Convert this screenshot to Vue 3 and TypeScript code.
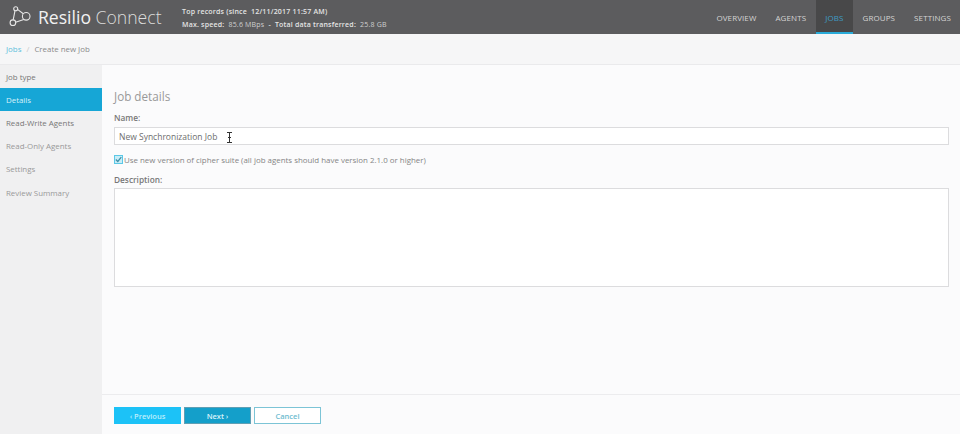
<script setup lang="ts">
const steps = ['Job type', 'Details', 'Read-Write Agents', 'Read-Only Agents', 'Settings', 'Review Summary']
const nav = ['OVERVIEW', 'AGENTS', 'JOBS', 'GROUPS', 'SETTINGS']
</script>

<template>
  <div class="page">
    <header class="top">
      <div class="brand">
        <svg class="logo" width="24" height="24" viewBox="0 0 24 24" fill="none" stroke="#e6e6e6" stroke-width="1.1">
          <circle cx="6.700" cy="3.700" r="2" />
          <circle cx="17.200" cy="11.300" r="3.800" />
          <circle cx="3.900" cy="17.700" r="2.800" />
          <path d="M6 5.600 L4.200 14.900 M8.500 4.400 L14.300 8.800 M6.600 17.300 L14.800 14.400" />
        </svg>
        <span class="name"><span class="name-a">Resilio</span> <span class="name-b">Connect</span></span>
      </div>
      <div class="records">
        <div>Top records (since&nbsp; 12/11/2017 11:57 AM)</div>
        <div>Max. speed:&nbsp; <span class="dim">85.6 MBps</span>&nbsp; -&nbsp; Total data transferred:&nbsp; <span class="dim">25.8 GB</span></div>
      </div>
      <nav class="nav">
        <a v-for="n in nav" :key="n" class="nav-item" :class="{ active: n === 'JOBS' }">{{ n }}</a>
      </nav>
    </header>

    <div class="crumbs">
      <a class="crumb-link">Jobs</a><span class="sep">/</span><span>Create new Job</span>
    </div>

    <div class="body">
      <aside class="side">
        <div v-for="s in steps" :key="s" class="step" :class="{
          current: s === 'Details',
          soft: ['Read-Only Agents', 'Settings', 'Review Summary'].includes(s)
        }">{{ s }}</div>
      </aside>

      <main class="main">
        <div class="form">
          <h1 class="title">Job details</h1>
          <label class="label">Name:</label>
          <div class="input">
            <span>New Synchronization Job</span>
            <svg class="caret" width="7" height="11" viewBox="0 0 7 11" fill="none" stroke="#333" stroke-width="1">
              <path d="M1 .5h5M1 10.500h5M3.500 .5v10M2 5.500h3" />
            </svg>
          </div>
          <div class="check-row">
            <span class="box">
              <svg width="7" height="7" viewBox="0 0 7 7" fill="none" stroke="#3f8fa8" stroke-width="1.200"><path d="M.8 3.500 2.800 5.500 6.300 1.200" /></svg>
            </span>
            Use new version of cipher suite (all job agents should have version 2.1.0 or higher)
          </div>
          <label class="label desc">Description:</label>
          <div class="textarea"></div>
        </div>
        <footer class="foot">
          <button class="btn prev">‹ Previous</button>
          <button class="btn next">Next ›</button>
          <button class="btn cancel">Cancel</button>
        </footer>
      </main>
    </div>
  </div>
</template>

<style scoped>
.page {
  width: 960px;
  height: 434px;
  display: flex;
  flex-direction: column;
  overflow: hidden;
  font-family: "Open Sans", "Liberation Sans", sans-serif;
  background: #fbfbfc;
  color: #666;
}
.top {
  height: 34px;
  flex: none;
  background: #5c5c5e;
  display: flex;
  align-items: center;
  padding-left: 9px;
}
.brand {
  display: flex;
  align-items: center;
  gap: 5px;
  width: 173px;
}
.logo {
  flex: none;
}
.name {
  font-size: 17.600px;
  white-space: nowrap;
}
.name-a {
  color: #f2f2f2;
}
.name-b {
  color: #dcdcdc;
  font-weight: 300;
}
.records {
  font-size: 7px;
  font-weight: 600;
  line-height: 13px;
  color: #e4e4e4;
  letter-spacing: 0.2px;
  white-space: nowrap;
  padding-top: 2px;
}
.dim {
  color: #cfcfcf;
  font-weight: 400;
}
.nav {
  margin-left: auto;
  margin-right: 9px;
  display: flex;
  height: 100%;
}
.nav-item {
  display: flex;
  align-items: center;
  height: 100%;
  padding: 0 9.500px;
  font-size: 8px;
  letter-spacing: 0.1px;
  color: #d4d4d4;
  box-sizing: border-box;
}
.nav-item:last-child {
  padding-right: 0;
}
.nav-item.active {
  background: #484849;
  color: #3f9cc4;
  border-bottom: 2px solid #29abd9;
  padding-top: 2px;
}
.crumbs {
  height: 31px;
  flex: none;
  box-sizing: border-box;
  background: #f6f6f7;
  border-bottom: 1px solid #eaeaec;
  display: flex;
  align-items: center;
  padding-left: 6px;
  font-size: 7.900px;
  color: #8a8a8a;
}
.crumb-link {
  color: #5dbfdc;
}
.sep {
  margin: 0 5px;
  color: #c8c8c8;
}
.body {
  flex: 1;
  display: flex;
  min-height: 0;
}
.side {
  width: 102px;
  flex: none;
  background: #f0f0f1;
}
.step {
  height: 23.200px;
  display: flex;
  align-items: center;
  padding-left: 6px;
  font-size: 7.900px;
  color: #777;
}
.step.current {
  background: #16a6d6;
  color: #d8f1fa;
}
.step.soft {
  color: #999;
}
.main {
  flex: 1;
  display: flex;
  flex-direction: column;
  min-width: 0;
}
.form {
  flex: 1;
  padding: 22px 11px 0 12px;
}
.title {
  margin: 0;
  font-size: 11.700px;
  line-height: 18px;
  font-weight: 400;
  color: #999;
}
.label {
  display: block;
  margin-top: 7px;
  font-size: 8.300px;
  line-height: 12px;
  font-weight: 600;
  color: #777;
}
.label.desc {
  margin-top: 9px;
}
.input {
  margin-top: 3px;
  height: 18px;
  box-sizing: border-box;
  background: #fff;
  border: 1px solid #dcdcde;
  display: flex;
  align-items: center;
  padding-left: 4px;
  font-size: 8.500px;
  color: #6e6e6e;
  white-space: pre;
}
.caret {
  margin-left: 9px;
  margin-top: 3px;
}
.check-row {
  margin-top: 9px;
  display: flex;
  align-items: center;
  gap: 1px;
  height: 11px;
  font-size: 7.920px;
  color: #858585;
}
.box {
  width: 9px;
  height: 9px;
  box-sizing: border-box;
  background: #c8edf7;
  border: 1px solid #5cc8e6;
  display: flex;
  align-items: center;
  justify-content: center;
}
.textarea {
  margin-top: 2px;
  height: 99px;
  box-sizing: border-box;
  background: #fff;
  border: 1px solid #dcdcde;
}
.foot {
  height: 40px;
  flex: none;
  box-sizing: border-box;
  border-top: 1px solid #ececee;
  display: flex;
  align-items: flex-start;
  gap: 3px;
  padding: 12px 0 0 12px;
}
.btn {
  width: 67px;
  height: 17px;
  box-sizing: border-box;
  border: 0;
  padding: 0;
  font-family: inherit;
  font-size: 7.500px;
  font-weight: 600;
}
.prev {
  background: #1cc2f7;
  color: #bdeefc;
}
.next {
  background: #149fca;
  color: #d9f3fb;
  border: 1px solid #5f9fb4;
}
.cancel {
  background: #fff;
  color: #6fbcd0;
  border: 1px solid #7cc4d6;
}
</style>
